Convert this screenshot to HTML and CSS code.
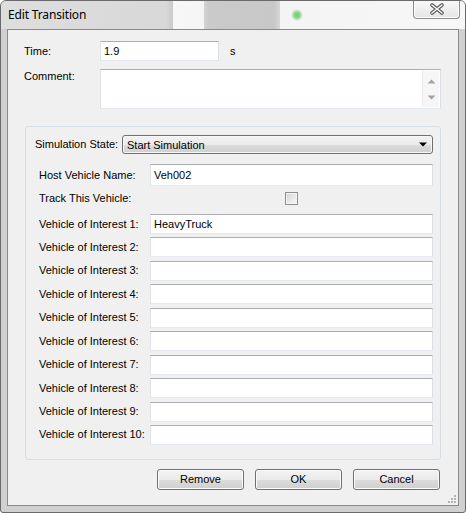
FILE: index.html
```html
<!DOCTYPE html>
<html>
<head>
<meta charset="utf-8">
<title>Edit Transition</title>
<link rel="stylesheet" href="styles.css">
</head>
<body>
<div class="window">
  <div class="titlebar">
    <span class="title">Edit Transition</span>
    <div class="close">
      <svg width="16" height="12" viewBox="0 0 16 12">
        <path d="M3 2 L13 10 M13 2 L3 10" stroke="#5b5b5b" stroke-width="3.6" stroke-linecap="round" fill="none"/>
        <path d="M3 2 L13 10 M13 2 L3 10" stroke="#f4f4f4" stroke-width="1.6" stroke-linecap="round" fill="none"/>
      </svg>
    </div>
  </div>
  <div class="client">
    <div class="toprow">
      <span class="lbl top-lbl time-lbl">Time:</span>
      <div class="tb time">1.9</div>
      <span class="lbl unit">s</span>
    </div>
    <div class="toprow comment-row">
      <span class="lbl top-lbl comment-lbl">Comment:</span>
      <div class="tb memo">
        <div class="memo-text"></div>
        <div class="vscroll">
          <svg width="9" height="5" viewBox="0 0 9 5"><path d="M0.5 4.5 L4.5 0.5 L8.5 4.5 Z" fill="#a3a3a3"/></svg>
          <svg width="9" height="5" viewBox="0 0 9 5"><path d="M0.5 0.5 L4.5 4.5 L8.5 0.5 Z" fill="#a3a3a3"/></svg>
        </div>
      </div>
    </div>
    <div class="group">
      <div class="simrow">
        <span class="lbl sim-lbl">Simulation State:</span>
        <div class="combo">
          <span class="combo-text">Start Simulation</span>
          <svg width="8" height="5" viewBox="0 0 8 5"><path d="M0 0.5 L8 0.5 L4 4.5 Z" fill="#000"/></svg>
        </div>
      </div>
      <div class="fields">
        <div class="frow host-row"><span class="lbl flbl">Host Vehicle Name:</span><div class="tb field">Veh002</div></div>
        <div class="frow track-row"><span class="lbl flbl">Track This Vehicle:</span><div class="check-cell"><div class="check"></div></div></div>
        <div class="frow voi first"><span class="lbl flbl">Vehicle of Interest 1:</span><div class="tb field">HeavyTruck</div></div>
        <div class="frow voi"><span class="lbl flbl">Vehicle of Interest 2:</span><div class="tb field"></div></div>
        <div class="frow voi"><span class="lbl flbl">Vehicle of Interest 3:</span><div class="tb field"></div></div>
        <div class="frow voi"><span class="lbl flbl">Vehicle of Interest 4:</span><div class="tb field"></div></div>
        <div class="frow voi"><span class="lbl flbl">Vehicle of Interest 5:</span><div class="tb field"></div></div>
        <div class="frow voi"><span class="lbl flbl">Vehicle of Interest 6:</span><div class="tb field"></div></div>
        <div class="frow voi"><span class="lbl flbl">Vehicle of Interest 7:</span><div class="tb field"></div></div>
        <div class="frow voi"><span class="lbl flbl">Vehicle of Interest 8:</span><div class="tb field"></div></div>
        <div class="frow voi"><span class="lbl flbl">Vehicle of Interest 9:</span><div class="tb field"></div></div>
        <div class="frow voi"><span class="lbl flbl">Vehicle of Interest 10:</span><div class="tb field"></div></div>
      </div>
    </div>
    <div class="buttons">
      <div class="btn">Remove</div>
      <div class="btn">OK</div>
      <div class="btn">Cancel</div>
    </div>
    <svg class="grip" width="10" height="10" viewBox="0 0 10 10">
      <rect x="7" y="1" width="2" height="2" fill="#b4b4b4"/>
      <rect x="4" y="4" width="2" height="2" fill="#b4b4b4"/>
      <rect x="7" y="4" width="2" height="2" fill="#b4b4b4"/>
      <rect x="1" y="7" width="2" height="2" fill="#b4b4b4"/>
      <rect x="4" y="7" width="2" height="2" fill="#b4b4b4"/>
      <rect x="7" y="7" width="2" height="2" fill="#b4b4b4"/>
    </svg>
  </div>
</div>
</body>
</html>
```

FILE: styles.css
```css
html, body {
  margin: 0;
  padding: 0;
  width: 466px;
  height: 513px;
  overflow: hidden;
  background: #ffffff;
}

.window {
  box-sizing: border-box;
  width: 466px;
  height: 513px;
  border: 1px solid #6a6a6a;
  border-radius: 6px 6px 3px 3px;
  background: #d0d0d0;
  display: flex;
  flex-direction: column;
  overflow: hidden;
}

.titlebar {
  height: 28px;
  flex: none;
  display: flex;
  justify-content: space-between;
  align-items: flex-start;
  background:
    radial-gradient(circle at 296px 14px, #6fcb6f 0px, #8fd68f 3px, rgba(244,244,244,0) 6px) 0 0 / 100% 100% no-repeat,
    linear-gradient(90deg, #d6d6d6, #c9c9c9) 166px 0 / 6px 100% no-repeat,
    linear-gradient(90deg, #f7f7f7, #f5f5f5) 172px 0 / 31px 100% no-repeat,
    linear-gradient(90deg, #d4d4d4, #cacaca 5px, #c8c8c8 70px, #d8d8d8) 203px 0 / 76px 100% no-repeat,
    linear-gradient(90deg, #f4f4f4, #f7f7f7) 279px 0 / 200px 100% no-repeat,
    linear-gradient(90deg, #dedede, #d8d8d8) 0 0 / 166px 100% no-repeat;
}

.title {
  font-family: "Noto Sans", "Open Sans", sans-serif;
  font-size: 12px;
  line-height: 16px;
  color: #000;
  padding: 6px 0 0 7px;
  letter-spacing: -0.15px;
}

.close {
  box-sizing: border-box;
  width: 47px;
  height: 19px;
  margin: -1px 5px 0 0;
  border: 1px solid #8c8c8c;
  border-top: none;
  border-radius: 0 0 4px 4px;
  background: linear-gradient(to bottom, #f9f9f9 0, #eeeeee 55%, #e4e4e4 100%);
  box-shadow: inset 0 -1px 0 #fdfdfd, inset 1px 0 0 #fdfdfd, inset -1px 0 0 #fdfdfd;
  display: flex;
  align-items: center;
  justify-content: center;
}

.close svg {
  display: block;
}

.client {
  position: relative;
  flex: 1;
  margin: 0 6px 6px 6px;
  border: 1px solid #8a8a8a;
  background: #f0f0f0;
  padding: 11px 0 0 0;
  display: flex;
  flex-direction: column;
}

.lbl {
  font-family: "Liberation Sans", Arial, sans-serif;
  font-size: 11px;
  line-height: 13px;
  color: #000;
  white-space: nowrap;
}

.toprow {
  display: flex;
  align-items: flex-start;
  padding-left: 16px;
}

.top-lbl {
  width: 76px;
  flex: none;
}

.time-lbl {
  padding-top: 4px;
}

.comment-lbl {
  padding-top: 1px;
}

.unit {
  padding: 4px 0 0 11px;
}

.tb {
  box-sizing: border-box;
  background: #ffffff;
  border: 1px solid;
  border-color: #abadb3 #dbdfe6 #e3e9ef #e2e3ea;
  font-family: "Liberation Sans", Arial, sans-serif;
  font-size: 11px;
  color: #000;
  padding: 0 3px;
  display: flex;
  align-items: center;
}

.time {
  width: 119px;
  height: 20px;
}

.comment-row {
  margin-top: 8px;
}

.memo {
  width: 341px;
  height: 40px;
  padding: 0;
  align-items: stretch;
}

.memo-text {
  flex: 1;
}

.vscroll {
  width: 16px;
  margin: 1px 1px 1px 0;
  background: #f6f6f6;
  border-left: 1px solid #ececec;
  display: flex;
  flex-direction: column;
  align-items: center;
  justify-content: space-between;
  padding: 8px 0 7px 0;
}

.vscroll svg {
  display: block;
}

.group {
  margin: 17px 17px 0 17px;
  border: 1px solid #d5dfe5;
  border-radius: 3px;
  padding: 8px 7px 14px 9px;
}

.simrow {
  display: flex;
  align-items: center;
}

.sim-lbl {
  width: 87px;
  flex: none;
}

.combo {
  box-sizing: border-box;
  flex: 1;
  height: 19px;
  border: 1px solid #707070;
  border-radius: 3px;
  background: linear-gradient(to bottom, #f2f2f2 0, #ebebeb 50%, #dddddd 51%, #cfcfcf 100%);
  box-shadow: inset 0 0 0 1px #f8f8f8;
  display: flex;
  align-items: center;
  justify-content: space-between;
  padding: 0 5px 0 4px;
  font-family: "Liberation Sans", Arial, sans-serif;
  font-size: 11px;
  color: #000;
}

.combo svg {
  display: block;
}

.fields {
  margin-top: 10px;
  padding-left: 4px;
  display: flex;
  flex-direction: column;
}

.frow {
  display: flex;
  align-items: center;
}

.flbl {
  width: 111px;
  flex: none;
}

.field {
  flex: 1;
  height: 20px;
}

.host-row .field {
  height: 22px;
}

.track-row {
  margin-top: 6px;
  height: 13px;
}

.check-cell {
  flex: 1;
  display: flex;
  justify-content: center;
}

.check {
  box-sizing: border-box;
  width: 13px;
  height: 13px;
  border: 1px solid #8e8f8f;
  background: linear-gradient(135deg, #cfd2d6 0, #e6e7e9 50%, #f8f8f8 100%);
  box-shadow: inset 0 0 0 1px #f4f4f4;
}

.voi {
  margin-top: 3.44px;
}

.voi.first {
  margin-top: 9px;
}

.buttons {
  display: flex;
  justify-content: flex-end;
  gap: 11px;
  margin: 9px 18px 0 0;
}

.btn {
  box-sizing: border-box;
  width: 87px;
  height: 21px;
  border: 1px solid #707070;
  border-radius: 3px;
  background: linear-gradient(to bottom, #f2f2f2 0, #ebebeb 50%, #dddddd 51%, #cfcfcf 100%);
  box-shadow: inset 0 0 0 1px #fbfbfb;
  font-family: "Liberation Sans", Arial, sans-serif;
  font-size: 11px;
  color: #000;
  display: flex;
  align-items: center;
  justify-content: center;
}

.grip {
  position: absolute;
  right: 1px;
  bottom: 1px;
  display: block;
}
```
